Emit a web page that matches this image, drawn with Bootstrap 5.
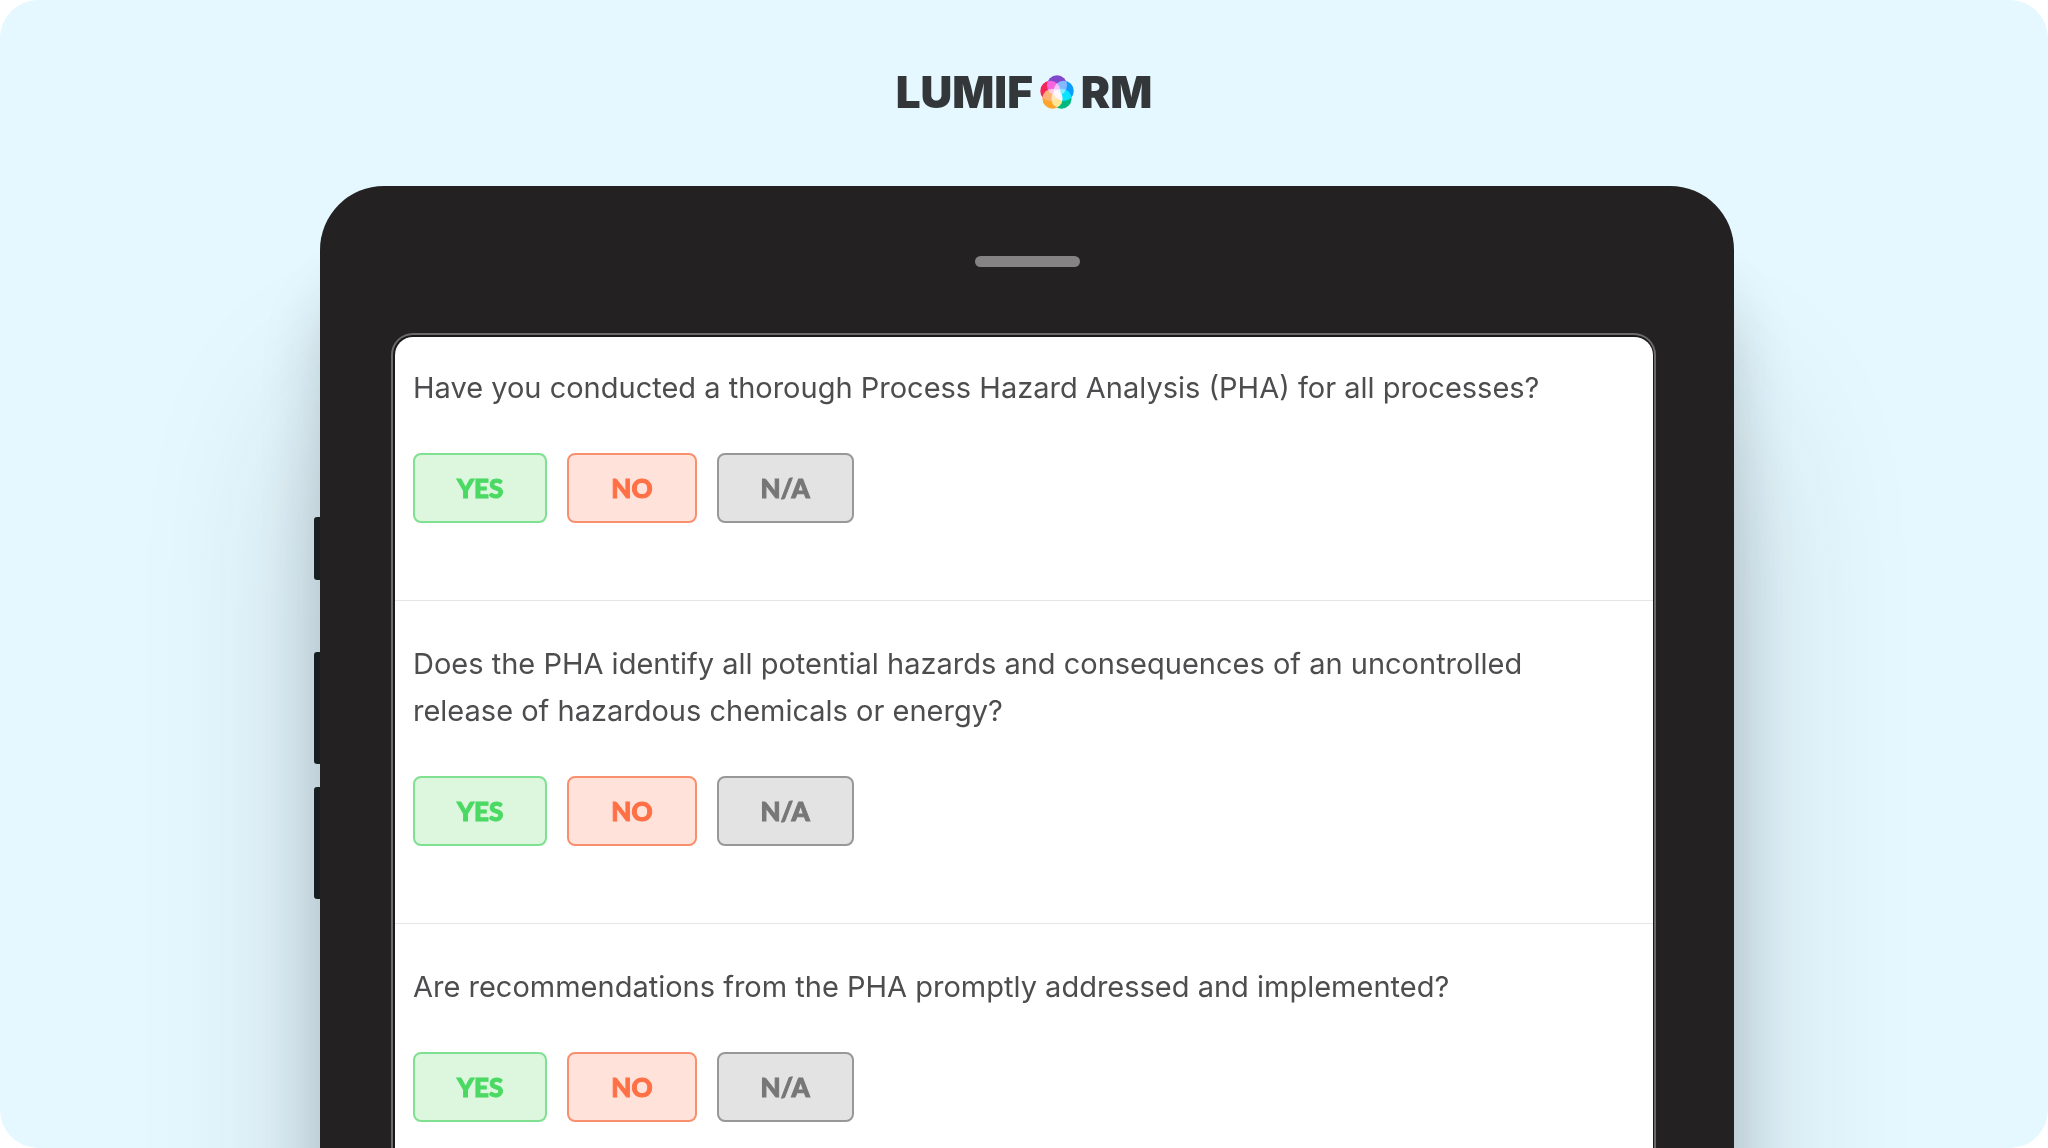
<!DOCTYPE html>
<html lang="en">
<head>
<meta charset="utf-8">
<meta name="viewport" content="width=device-width, initial-scale=1">
<title>Lumiform – Process Hazard Analysis</title>
<link href="https://cdn.jsdelivr.net/npm/bootstrap@5.3.0/dist/css/bootstrap.min.css" rel="stylesheet">
<style>
  body { background: #fff; font-family: Inter, Roboto, "Liberation Sans", sans-serif; }
  .stage { background: #e6f8ff; border-radius: 38px; }
  .wordmark { font: 900 44px/48px Inter, "Open Sans", sans-serif; color: #33373a; padding: 68px 0 70px; gap: 6px; }
  .wordmark svg { width: 36px; height: 38px; }
  .petals { isolation: isolate; }
  .petals circle { mix-blend-mode: screen; }
  .tablet { width: 100%; max-width: 1420px; }
  .side-keys { width: 6px; padding-top: 331px; }
  .key { background: #1b2022; border-radius: 3px 0 0 3px; height: 112px; margin-bottom: 23px; }
  .key-short { height: 63px; margin-bottom: 72px; }
  .shell { background: #232122; border-radius: 64px 64px 0 0; padding-top: 70px;
    box-shadow: 0 100px 60px rgba(20,30,35,.18), 0 220px 180px rgba(20,30,35,.19); }
  .speaker { width: 105px; height: 11px; border-radius: 6px; background: #858384; margin-bottom: 68px; }
  .display { background: #fff; border: solid #1a1819; border-width: 2px 1px 0 2px; border-radius: 20px 20px 0 0;
    box-shadow: 0 0 0 2px #6b696a; margin: 0 80px 0 73px; }
  .question { padding: 39px 18px 77px; border-bottom: 1px solid #e6e6e8; }
  .question:first-child { padding-top: 27px; }
  .question h2 { font-size: 29px; line-height: 47px; font-weight: 400; color: #4d4d4f; margin: 0 80px 42px 0; }
  .answers { gap: 20px; }
  .answer { font: 900 26px/36px Lato, "Open Sans", sans-serif; -webkit-text-stroke: 1px; padding: 15px 42px; border: 2px solid; border-radius: 8px; }
  .answer-yes, .answer-yes:hover { color: #4bd964; background: #ddf7df; border-color: #7fe092; }
  .answer-no, .answer-no:hover { color: #ff7046; background: #ffe2da; border-color: #f8906f; }
  .answer-na, .answer-na:hover { color: #777; background: #e3e3e3; border-color: #989898; }
</style>
</head>
<body>
<main class="stage vh-100 overflow-hidden d-flex flex-column align-items-center">
  <header class="wordmark d-flex align-items-center">
    <span>LUMIF</span>
    <svg viewBox="0 0 32 34" role="img" aria-label="O">
      <g class="petals">
        <circle cx="16" cy="11" r="9" fill="#8048cc"/>
        <circle cx="22" cy="16" r="9" fill="#0a9cff"/>
        <circle cx="20" cy="23" r="9" fill="#00b980"/>
        <circle cx="12" cy="23" r="9" fill="#ffa52a"/>
        <circle cx="10" cy="16" r="9" fill="#f3265a"/>
      </g>
    </svg>
    <span>RM</span>
  </header>

  <div class="tablet d-flex flex-grow-1">
    <div class="side-keys flex-shrink-0">
      <div class="key key-short"></div>
      <div class="key"></div>
      <div class="key"></div>
    </div>
    <div class="shell flex-grow-1 d-flex flex-column">
      <div class="speaker mx-auto flex-shrink-0"></div>
      <div class="display flex-grow-1">
        <section class="question">
          <h2>Have you conducted a thorough Process Hazard Analysis (PHA) for all processes?</h2>
          <div class="answers d-flex">
            <button type="button" class="btn answer answer-yes">YES</button>
            <button type="button" class="btn answer answer-no">NO</button>
            <button type="button" class="btn answer answer-na">N/A</button>
          </div>
        </section>
        <section class="question">
          <h2>Does the PHA identify all potential hazards and consequences of an uncontrolled release of hazardous chemicals or energy?</h2>
          <div class="answers d-flex">
            <button type="button" class="btn answer answer-yes">YES</button>
            <button type="button" class="btn answer answer-no">NO</button>
            <button type="button" class="btn answer answer-na">N/A</button>
          </div>
        </section>
        <section class="question">
          <h2>Are recommendations from the PHA promptly addressed and implemented?</h2>
          <div class="answers d-flex">
            <button type="button" class="btn answer answer-yes">YES</button>
            <button type="button" class="btn answer answer-no">NO</button>
            <button type="button" class="btn answer answer-na">N/A</button>
          </div>
        </section>
      </div>
    </div>
  </div>
</main>
<script src="https://cdn.jsdelivr.net/npm/bootstrap@5.3.0/dist/js/bootstrap.bundle.min.js"></script>
</body>
</html>
